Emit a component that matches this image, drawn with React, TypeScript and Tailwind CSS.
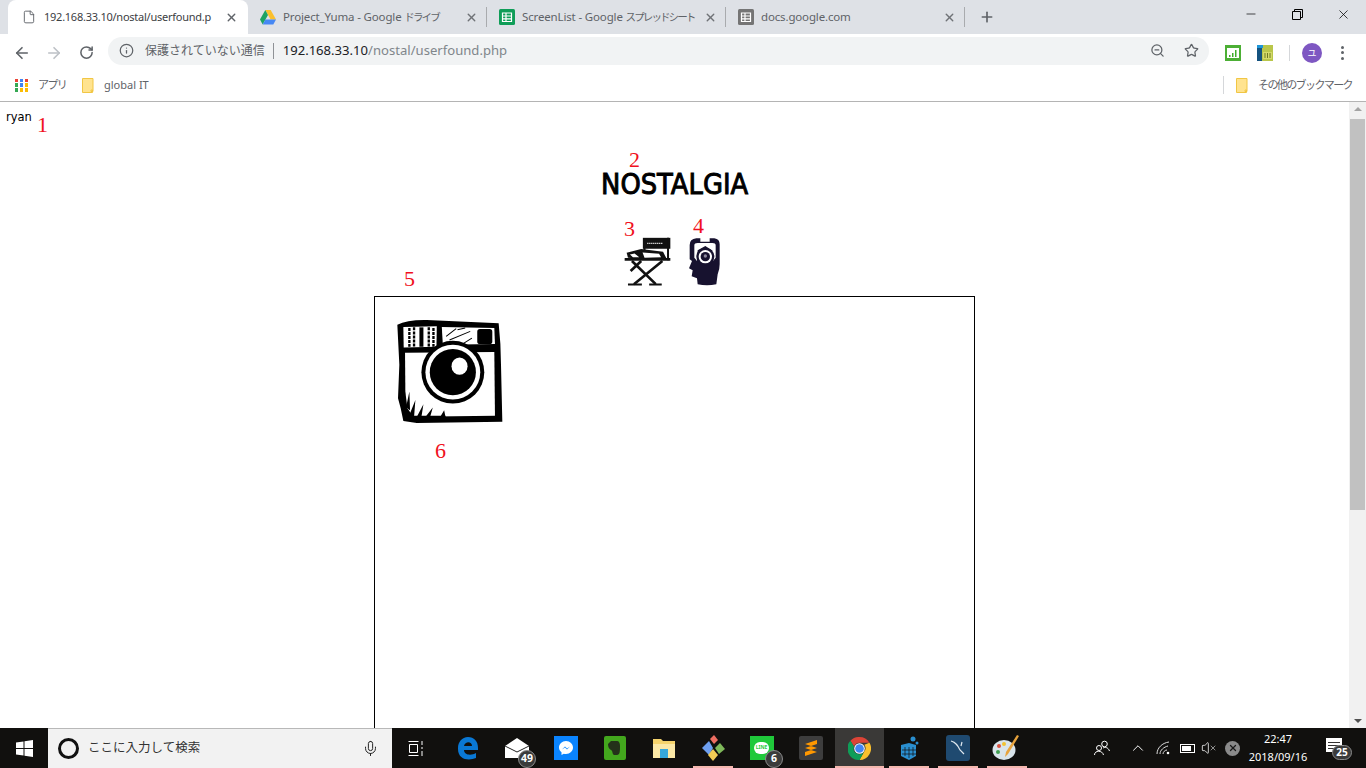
import React from 'react';
import { ArrowLeft, ArrowRight, RotateCw, Info, ZoomOut, Star, X, Plus, Minus, Mic, ChevronUp, Volume, File as FileIcon } from 'lucide-react';

const uiFont = 'font-["Noto_Sans","Noto_Sans_CJK_JP",sans-serif]';

// sheet style favicon, green for Sheets and grey for docs
const GridIcon = ({ color }: { color: string }) => (
  <svg width="16" height="16" viewBox="0 0 16 16" className="shrink-0">
    <rect width="16" height="16" rx="1.5" fill={color} />
    <path d="M3.5 4h9v8.5h-9z M3.5 7h9 M3.5 9.8h9 M7 4v8.5" fill="none" stroke="#fff" strokeWidth="1.2" />
  </svg>
);

const DriveIcon = () => (
  <svg width="16" height="15" viewBox="0 0 16 15" className="shrink-0">
    <path d="M5.3 0h5.4l5.3 9.5h-5.4z" fill="#fbc02d" />
    <path d="M5.3 0L0 9.5l2.7 5L8 5z" fill="#1ea362" />
    <path d="M2.7 14.5h10.6l2.7-5H5.4z" fill="#4688f4" />
  </svg>
);

const FolderIcon = () => (
  <svg width="12" height="15" viewBox="0 0 12 15" className="shrink-0">
    <path d="M.5.5h10.5v13h-2V12h1.500v2.500H.5z" fill="#ffe38f" stroke="#f1c644" />
  </svg>
);

const AppsIcon = () => (
  <div className="grid grid-cols-3 gap-[1.5px] w-[13px] h-[13px] shrink-0">
    {['#ea4335', '#4285f4', '#ea4335', '#34a853', '#4285f4', '#fbbc05', '#34a853', '#fbbc05', '#fbbc05'].map((c, i) => (
      <div key={i} style={{ backgroundColor: c }} />
    ))}
  </div>
);

const TabKana = ({ children }: { children: React.ReactNode }) => (
  <span className="text-[10.5px] tracking-[-1.9px]">{children}</span>
);

const BarKana = ({ children, className }: { children: React.ReactNode; className?: string }) => (
  <span className={`text-[11px] tracking-[-1.6px] whitespace-nowrap ${className ?? ''}`}>{children}</span>
);

const Tab = ({ icon, children, divider }: { icon: React.ReactNode; children: React.ReactNode; divider?: boolean }) => (
  <div className="relative flex items-center w-[239px] h-full pl-[12px] pr-[9px]">
    {icon}
    <span className="ml-[7px] text-[11.5px] tracking-[-0.15px] text-[#5f6368] whitespace-nowrap">{children}</span>
    <X size={13} strokeWidth={2.5} className="ml-auto text-[#6f7276]" />
    {divider && <div className="absolute right-0 top-[7px] w-px h-[20px] bg-[#a9abae]" />}
  </div>
);

const TabStrip = () => (
  <div className={`flex h-[34px] pl-[8px] bg-[#dee1e6] ${uiFont}`}>
    <div className="flex items-center w-[240px] h-full pl-[14px] pr-[10px] bg-white rounded-t-[8px]">
      <FileIcon size={14} strokeWidth={1.6} className="text-[#5f6368] shrink-0" />
      <span className="ml-[8px] text-[11px] tracking-[-0.25px] text-[#3c4043] whitespace-nowrap">192.168.33.10/nostal/userfound.p</span>
      <X size={13} strokeWidth={2.5} className="ml-auto text-[#5f6368]" />
    </div>
    <Tab icon={<DriveIcon />} divider>Project_Yuma - Google <TabKana>ドライブ</TabKana></Tab>
    <Tab icon={<GridIcon color="#0f9d58" />} divider>ScreenList - Google <TabKana>スプレッドシート</TabKana></Tab>
    <Tab icon={<GridIcon color="#757575" />} divider>docs.google.com</Tab>
    <div className="flex items-center justify-center w-[44px]">
      <Plus size={16} strokeWidth={2.5} className="text-[#5f6368]" />
    </div>
    <div className="flex ml-auto">
      <div className="flex items-center justify-center w-[46px] pb-[6px]"><Minus size={14} strokeWidth={1.2} className="text-black" /></div>
      <div className="flex items-center justify-center w-[46px] pb-[6px]">
        <svg width="11" height="11" viewBox="0 0 11 11" fill="none" stroke="#000"><path d="M.5 2.500h8v8h-8z M2.500 2.500v-2h8v8h-2" /></svg>
      </div>
      <div className="flex items-center justify-center w-[46px] pb-[6px]"><X size={15} strokeWidth={1.2} className="text-black" /></div>
    </div>
  </div>
);

const Toolbar = () => (
  <div className={`flex items-center h-[37px] pl-[6px] bg-white ${uiFont}`}>
    <div className="flex items-center justify-center w-[32px]"><ArrowLeft size={18} strokeWidth={2.2} className="text-[#5f6368]" /></div>
    <div className="flex items-center justify-center w-[32px]"><ArrowRight size={18} strokeWidth={2.2} className="text-[#bdc1c6]" /></div>
    <div className="flex items-center justify-center w-[32px]"><RotateCw size={15} strokeWidth={2.4} className="text-[#5f6368]" /></div>
    <div className="flex items-center ml-[6px] w-[1101px] h-[28px] mb-[4px] pl-[11px] pr-[10px] rounded-full bg-[#f1f3f4]">
      <Info size={15} strokeWidth={2} className="text-[#5f6368]" />
      <span className="ml-[11px] text-[12px] text-[#5f6368] whitespace-nowrap">保護されていない通信</span>
      <div className="w-px h-[16px] ml-[8px] bg-[#8f9296]" />
      <span className="ml-[9px] text-[13.1px] text-[#202124] whitespace-nowrap">192.168.33.10<span className="text-[#80868b]">/nostal/userfound.php</span></span>
      <ZoomOut size={15} strokeWidth={2} className="ml-auto text-[#5f6368]" />
      <Star size={15} strokeWidth={2} className="ml-[19px] text-[#5f6368]" />
    </div>
    <svg className="ml-[16px] shrink-0" width="16" height="16" viewBox="0 0 16 16">
      <rect width="16" height="16" fill="#4caf35" />
      <rect x="2" y="3" width="12" height="10" fill="#fff" />
      <path d="M4 12h1.500v-2H4z M7 12h1.500V8H7z M10 12h1.500V5H10z" fill="#3fae2a" />
    </svg>
    <svg className="ml-[16px] shrink-0" width="16" height="16" viewBox="0 0 16 16">
      <rect width="16" height="16" fill="#b9c64a" />
      <rect width="5" height="16" fill="#14527f" />
      <path d="M0 0h6v3H0z" fill="#1e96d8" />
      <path d="M6 7h9v7H6z" fill="#d4da6a" />
      <path d="M8 8v5M10.500 8v5M13 8v5" stroke="#6f7a22" />
    </svg>
    <div className="ml-[16px] w-px h-[16px] bg-[#d5d7da]" />
    <div className="flex items-center justify-center ml-[12px] w-[20px] h-[20px] rounded-full bg-[#7e57c2] text-white text-[9px] shrink-0">ユ</div>
    <div className="flex flex-col gap-[2.500px] ml-[19px]">
      <div className="w-[3px] h-[3px] rounded-full bg-[#5f6368]" />
      <div className="w-[3px] h-[3px] rounded-full bg-[#5f6368]" />
      <div className="w-[3px] h-[3px] rounded-full bg-[#5f6368]" />
    </div>
  </div>
);

const BookmarksBar = () => (
  <div className={`flex items-center h-[31px] pb-[2px] pl-[15px] bg-white border-b border-[#b4b4b4] text-[11px] text-[#5f6368] ${uiFont}`}>
    <AppsIcon />
    <BarKana className="ml-[10px] w-[26px]">アプリ</BarKana>
    <div className="ml-[18px]"><FolderIcon /></div>
    <span className="ml-[10px]">global IT</span>
    <div className="ml-auto w-px h-[18px] bg-[#d5d7da]" />
    <div className="ml-[12px]"><FolderIcon /></div>
    <BarKana className="ml-[10px] mr-[15px] w-[93px]">その他のブックマーク</BarKana>
  </div>
);

const CameraImage = () => (
  <svg width="107" height="107" viewBox="78 160 320 320">
    <path d="M82 180Q110 165 170 166L385 176Q392 240 392 300L396 470L140 474L100 468L92 430L84 400L88 300Z" fill="#000" />
    <path d="M105 264L372 262L374 452L130 455L112 430L106 380Z" fill="#fff" />
    <path d="M100 187L200 185L199 246L101 248Z" fill="#fff" />
    <path d="M215 187L372 190L374 238L218 240Z" fill="#fff" />
    <path d="M118 190v56M132 188v58M176 188v58M190 190v56" stroke="#000" strokeWidth="7" strokeDasharray="9 3" />
    <path d="M154 188v58" stroke="#000" strokeWidth="12" />
    <rect x="321" y="193" width="45" height="45" rx="8" fill="#000" />
    <path d="M228 215L258 192M238 226L300 200M280 236L305 220M262 195L285 190" stroke="#000" strokeWidth="3" />
    <circle cx="248" cy="322" r="94" fill="#000" />
    <circle cx="248" cy="322" r="82" fill="#fff" />
    <circle cx="248" cy="322" r="69" fill="#000" />
    <ellipse cx="268" cy="304" rx="24" ry="26" fill="#fff" />
    <path d="M118 380L108 428L120 436Z M136 405L118 450L132 456Z M160 418L140 456L154 456Z M188 428L166 456L180 456Z M222 436L210 456L226 456Z" fill="#000" />
    <path d="M120 452H226V458H120Z" fill="#000" />
  </svg>
);

const ChairImage = () => (
  <svg width="47" height="50" viewBox="98 275 142 150">
    <rect x="155" y="280" width="83" height="33" fill="#111" />
    <path d="M168 297h46" stroke="#ddd" strokeWidth="4" strokeDasharray="4 2" />
    <path d="M231 280v68M160 310v14" stroke="#111" strokeWidth="6" />
    <path d="M100 345h138" stroke="#111" strokeWidth="8" />
    <path d="M106 325L150 314L216 322L226 342L130 342L110 340Z" fill="#111" />
    <path d="M154 324L204 328L210 339L160 340Z M116 330L130 327L144 339L125 339Z" fill="#fff" />
    <path d="M122 350L194 420M214 350L128 420M150 350L118 380" stroke="#111" strokeWidth="8" />
    <path d="M110 421h42M174 421h38" stroke="#111" strokeWidth="6" />
  </svg>
);

const HeadImage = () => (
  <svg width="34" height="50" viewBox="293 275 102 150">
    <path d="M318 282H330V292H358V282H372Q388 284 388 300V360Q388 376 382 390L378 420Q350 426 322 420L320 402L304 396L307 378L296 372L305 350L298 345V302Q298 284 318 282Z" fill="#17122f" />
    <path d="M312 303Q312 296 322 296H366Q376 296 376 303V340L368 350L365 318L345 305L322 318L320 350L312 340Z" fill="#fff" />
    <circle cx="345" cy="337" r="27" fill="#17122f" />
    <circle cx="345" cy="337" r="20" fill="#fff" />
    <circle cx="345" cy="337" r="14" fill="#17122f" />
    <circle cx="345" cy="335" r="5" fill="#8b879c" />
  </svg>
);

const Mark = ({ n, className }: { n: number; className: string }) => (
  <span className={`absolute text-[22px] leading-[22px] text-[#f01020] font-["Liberation_Serif",serif] ${className}`}>{n}</span>
);

const Page = () => (
  <div className="relative flex-1 overflow-hidden bg-white">
    <div className="h-[650px] mr-[17px]">
      <div className="pt-[8px] pl-[6px] text-[11.500px] leading-[15px] text-black font-['DejaVu_Sans',sans-serif]">ryan</div>
      <div className="mt-[46px] h-[26px] text-center text-[29px] leading-[26px] text-black [-webkit-text-stroke:1px_black] font-['DejaVu_Sans',sans-serif]">
        <span className="inline-block scale-x-[0.89]">NOSTALGIA</span>
      </div>
      <div className="flex justify-center items-start gap-[17px] mt-[39px] ml-[-3px]">
        <ChairImage />
        <HeadImage />
      </div>
      <div className="w-[601px] h-[500px] mt-[10px] ml-[374px] pt-[21px] pl-[21px] border border-black">
        <CameraImage />
      </div>
    </div>
    <Mark n={1} className="left-[37px] top-[12px]" />
    <Mark n={2} className="left-[629px] top-[47px]" />
    <Mark n={3} className="left-[624px] top-[116px]" />
    <Mark n={4} className="left-[693px] top-[113px]" />
    <Mark n={5} className="left-[404px] top-[166px]" />
    <Mark n={6} className="left-[435px] top-[338px]" />
    <div className="absolute right-0 top-0 bottom-0 flex flex-col items-center w-[17px] bg-[#f1f1f1]">
      <div className="mt-[5px] w-0 h-0 border-x-[4px] border-x-transparent border-b-[4px] border-b-[#a3a3a3]" />
      <div className="mt-[8px] w-[15px] h-[391px] bg-[#c1c1c1]" />
      <div className="mt-auto mb-[5px] w-0 h-0 border-x-[4px] border-x-transparent border-t-[4px] border-t-[#505050]" />
    </div>
  </div>
);

const TaskSlot = ({ children, open, active }: { children: React.ReactNode; open?: boolean; active?: boolean }) => (
  <div className={`relative flex items-center justify-center w-[49px] h-full ${active ? 'bg-[#3a3937]' : ''}`}>
    {children}
    {open && <div className={`absolute bottom-0 h-[2px] bg-[#f4b7ae] ${active ? 'left-0 right-0' : 'left-[5px] right-[4px]'}`} />}
  </div>
);

const Count = ({ n, className }: { n: number; className: string }) => (
  <span className={`absolute top-[22px] flex items-center justify-center min-w-[18px] h-[18px] px-[2px] rounded-full bg-[#3b3b3b] border border-[#8a8a8a] text-[10.5px] font-bold text-white ${className}`}>{n}</span>
);

const Taskbar = () => (
  <div className={`flex h-[40px] bg-[#11100e] ${uiFont}`}>
    <div className="flex items-center justify-center w-[48px] shrink-0">
      <svg width="17" height="17" viewBox="0 0 17 17" fill="#fff"><path d="M0 2.500L7.500 1.400V8H0z M8.500 1.300L17 0V8H8.500z M0 9h7.500v6.600L0 14.500z M8.500 9H17v8L8.500 15.700z" /></svg>
    </div>
    <div className="flex items-center w-[344px] h-full pl-[10px] pr-[13px] bg-[#f2f2f2] border-t border-[#b8b8b8] shrink-0">
      <div className="w-[21px] h-[21px] rounded-full border-[3px] border-[#111] shrink-0" />
      <span className="ml-[9px] text-[12.500px] text-[#333]">ここに入力して検索</span>
      <Mic size={17} strokeWidth={1.4} className="ml-auto text-[#222]" />
    </div>
    <div className="flex items-center justify-center w-[49px] pr-[1px] shrink-0">
      <svg width="17" height="17" viewBox="0 0 17 17" fill="none" stroke="#fff"><path d="M.5 1.500h10M.5 15.500h10M1.500 4.500h8v8h-8z M14 1v4 M14 7v2 M14 11v5" /></svg>
    </div>
    <div className="w-[2px] shrink-0" />
    <TaskSlot>
      <svg width="21" height="23" viewBox="0 0 21 23"><path d="M1 11C1 5 5 0 11 0c6 0 10 4 10 11v2H7c0 5 7 6 12 3v5c-7 3-18 2-18-9zM7 9h8c0-5-7-5-8 0z" fill="#0a78d4" /></svg>
    </TaskSlot>
    <TaskSlot>
      <svg width="24" height="20" viewBox="0 0 24 20"><path d="M0 8L12 0l12 8v12H0z" fill="#fff" /><path d="M0 8l12 6 12-6" fill="none" stroke="#222" /></svg>
      <Count n={49} className="left-[26px]" />
    </TaskSlot>
    <TaskSlot>
      <div className="flex items-center justify-center w-[24px] h-[24px] bg-[#0a84ff]">
        <svg width="14" height="14" viewBox="0 0 14 14"><path d="M7 0C3 0 0 3 0 6.500c0 2 1 3.700 2.500 4.800V14l2.300-1.300C5.500 13 6.200 13 7 13c4 0 7-3 7-6.500S11 0 7 0z" fill="#fff" /><path d="M3 8.500l3-3 2 2 3-2-3 3-2-2z" fill="#0a84ff" /></svg>
      </div>
    </TaskSlot>
    <TaskSlot>
      <div className="flex items-center justify-center w-[22px] h-[24px] rounded-[2px] bg-[#43a71d]">
        <svg width="13" height="16" viewBox="0 0 13 16"><path d="M3 1h6c2 0 3 2 3 5 0 5 0 9-3 9H6c-2-1-1-4-3-5C1 9 0 7 0 4z" fill="#24321a" /></svg>
      </div>
    </TaskSlot>
    <TaskSlot>
      <svg width="22" height="20" viewBox="0 0 22 20"><path d="M0 1h8l2 2h12v17H0z" fill="#f5d36c" /><path d="M0 6h22v14H0z" fill="#fbe8a6" /><path d="M7 11h8v9H7z" fill="#35a7dc" /></svg>
    </TaskSlot>
    <TaskSlot open>
      <svg width="24" height="28" viewBox="0 0 24 28"><path d="M1 14l7-7 4 7-4 7z" fill="#6e9ff0" /><path d="M9 5l4-4 4 5-4 4z" fill="#ee6e62" /><path d="M14 14l5-5 5 6-6 5z" fill="#7fb95a" /><path d="M7 21l5-6 5 6-5 6z" fill="#f3cd55" /></svg>
    </TaskSlot>
    <TaskSlot>
      <div className="flex items-center justify-center w-[24px] h-[24px] bg-[#1fc93a]">
        <div className="flex items-center justify-center w-[15px] h-[12px] rounded-full bg-white text-[5px] font-bold text-[#1fc93a]">LINE</div>
      </div>
      <Count n={6} className="left-[28px]" />
    </TaskSlot>
    <TaskSlot>
      <div className="flex items-center justify-center w-[24px] h-[24px] rounded-[2px] bg-[#3d3d3d]">
        <svg width="12" height="16" viewBox="0 0 12 16" fill="#ff9800"><path d="M12 0v4L0 8V4z M0 8l12 4v-4L0 4z M12 8v4L0 16v-4z" /></svg>
      </div>
    </TaskSlot>
    <TaskSlot open active>
      <svg width="23" height="23" viewBox="0 0 24 24">
        <path d="M12 0a12 12 0 0 1 10.400 6H12a6 6 0 0 0-5.700 4L2.500 4A12 12 0 0 1 12 0z" fill="#db4437" />
        <path d="M22.400 6A12 12 0 0 1 12 24l4.800-8.500A6 6 0 0 0 17 8z" fill="#fbc02d" />
        <path d="M2.500 4A12 12 0 0 0 12 24l4.800-8.500a6 6 0 0 1-10.500-5.500z" fill="#0f9d58" />
        <circle cx="12" cy="12" r="5.500" fill="#fff" />
        <circle cx="12" cy="12" r="4.500" fill="#4285f4" />
      </svg>
    </TaskSlot>
    <TaskSlot open>
      <svg width="20" height="24" viewBox="0 0 20 24" fill="#2a8fd0"><path d="M2 9l8-2 7 2v11l-7 4-8-4z" /><circle cx="14" cy="3" r="2.500" /><circle cx="18" cy="7" r="1.500" /><path d="M6 11v9M10 11v11M14 11v9M3 14h14M3 18h14" stroke="#11100e" strokeWidth=".7" /></svg>
    </TaskSlot>
    <TaskSlot open>
      <div className="flex items-center justify-center w-[24px] h-[26px] rounded-[3px] bg-[#1f4a70]">
        <svg width="18" height="18" viewBox="0 0 18 18" fill="none" stroke="#dfe8ef" strokeWidth="1.2"><path d="M2 2c5 1 7 5 9 9l4 4M13 3l-1 4" /></svg>
      </div>
    </TaskSlot>
    <TaskSlot open>
      <svg width="29" height="26" viewBox="0 0 29 26">
        <ellipse cx="12" cy="15" rx="11.500" ry="10" fill="#d9e4ea" />
        <circle cx="7" cy="11" r="2" fill="#d8503f" /><circle cx="12" cy="9" r="2" fill="#f2c230" /><circle cx="6" cy="17" r="2" fill="#3f9f4f" />
        <path d="M27 1L16 19l-3 3 1-5L25 0z" fill="#e8a33c" />
      </svg>
    </TaskSlot>
    <div className="flex items-center flex-1 text-white">
      <svg className="ml-[63px]" width="16" height="16" viewBox="0 0 16 16" fill="none" stroke="#fff"><circle cx="10.500" cy="4" r="2.800" /><circle cx="5" cy="8" r="2.500" /><path d="M.5 15c0-5 8-5 9 0 M9 8c2-1 5-1 6.500 3" /></svg>
      <ChevronUp size={18} strokeWidth={1.3} className="ml-[19px]" />
      <svg className="ml-[9px]" width="14" height="14" viewBox="0 0 14 14" fill="none" stroke="#ddd"><path d="M1 13C1 7 6 2 13 1M4 13c0-4 4-7 8-8M7 13c0-2 2-4 4-4" /><circle cx="12" cy="12" r="1.300" fill="#fff" stroke="none" /></svg>
      <div className="flex items-center ml-[10px] w-[15px] h-[9px] border border-white p-[1px]"><div className="w-[9px] h-full bg-white" /></div>
      <Volume size={16} strokeWidth={1.2} className="ml-[6px]" />
      <X size={8} strokeWidth={1.6} className="ml-[-8px]" />
      <div className="flex items-center justify-center ml-[8px] w-[15px] h-[15px] rounded-full bg-[#8a8a8a]"><X size={10} strokeWidth={3} className="text-[#1a1a1a]" /></div>
      <div className="flex flex-col items-center ml-[7px] w-[62px] text-[11px] leading-[18px]">
        <span>22:47</span>
        <span className="whitespace-nowrap">2018/09/16</span>
      </div>
      <div className="relative ml-[17px]">
        <div className="flex flex-col gap-[2px] justify-center w-[16px] h-[14px] px-[2px] bg-white mb-[6px]">
          <div className="h-px bg-[#333]" /><div className="h-px bg-[#333]" /><div className="h-px bg-[#333]" />
        </div>
        <span className="absolute left-[6px] top-[7px] flex items-center justify-center w-[20px] h-[15px] rounded-full bg-[#3b3b3b] border border-[#8a8a8a] text-[10px] font-bold">25</span>
      </div>
    </div>
  </div>
);

const App: React.FC = () => (
  <div className="flex flex-col w-[1366px] h-[768px] overflow-hidden">
    <TabStrip />
    <Toolbar />
    <BookmarksBar />
    <Page />
    <Taskbar />
  </div>
);

export default App;
